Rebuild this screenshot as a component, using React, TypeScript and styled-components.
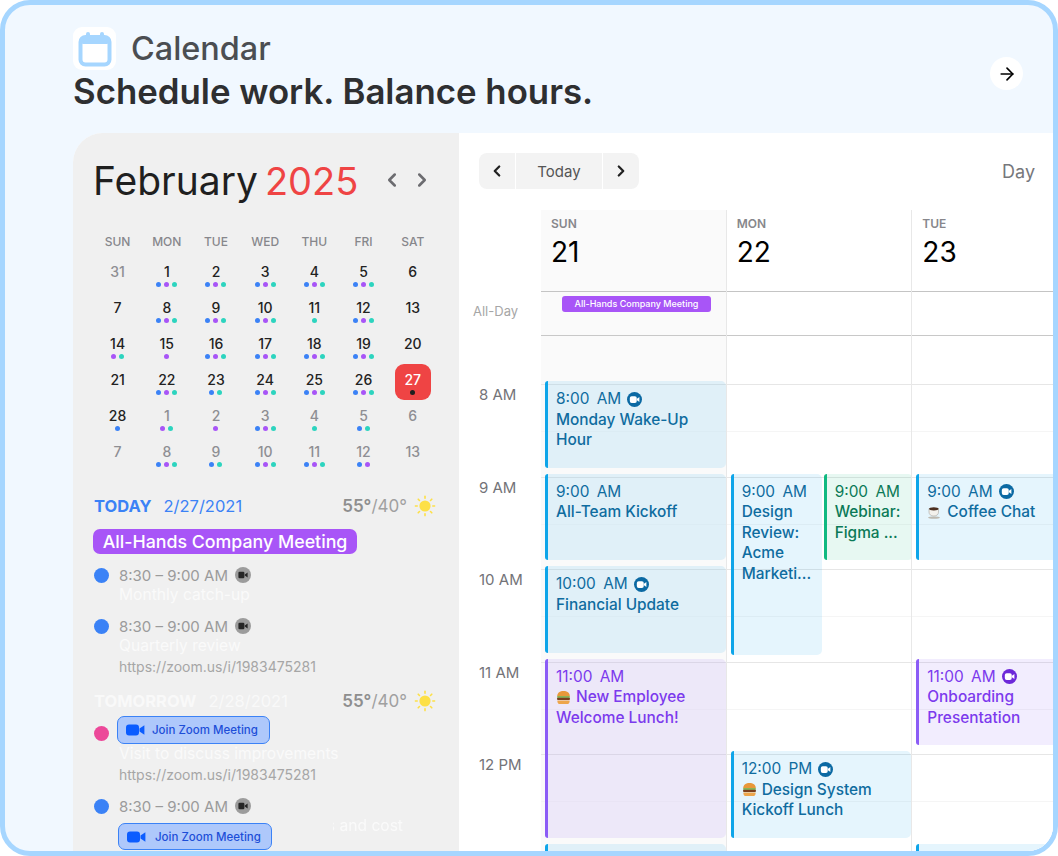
import React from 'react';
import styled, { createGlobalStyle } from 'styled-components';
import { ArrowRight, ChevronLeft, ChevronRight } from 'lucide-react';

const GlobalStyle = createGlobalStyle`
  html, body { margin: 0; padding: 0; background: #fff; }
  body { font-family: Inter, "Noto Sans", sans-serif; }
  * { box-sizing: border-box; }
`;

type Tone = 'blue' | 'green' | 'purple';

const tones = {
  blue: { bg: 'rgba(14,165,233,0.11)', bar: '#0ea5e9', text: '#0f6c9f', icon: '#0b69a3' },
  green: { bg: 'rgba(16,185,129,0.10)', bar: '#10b981', text: '#0b7a57', icon: '#0b7a57' },
  purple: { bg: 'rgba(139,92,246,0.11)', bar: '#8b5cf6', text: '#7c3aed', icon: '#6d28d9' },
};

const dotColors: Record<string, string> = { b: '#3b82f6', p: '#a855f7', t: '#2dd4bf', k: '#1f1f1f' };

const weekdays = ['SUN', 'MON', 'TUE', 'WED', 'THU', 'FRI', 'SAT'];

// [label, dots, muted]
const days: [string, string, boolean?][] = [
  ['31', '', true], ['1', 'bpt'], ['2', 'bpt'], ['3', 'bpt'], ['4', 'bpt'], ['5', 'bpt'], ['6', ''],
  ['7', ''], ['8', 'bpt'], ['9', 'bpt'], ['10', 'bpt'], ['11', 't'], ['12', 'bpt'], ['13', ''],
  ['14', 'pt'], ['15', 'p'], ['16', 'bpt'], ['17', 'bpt'], ['18', 'bpt'], ['19', 'bpt'], ['20', ''],
  ['21', ''], ['22', 'bpt'], ['23', 'bt'], ['24', 'bpt'], ['25', 'bpt'], ['26', 'bpt'], ['27', 'k'],
  ['28', 'b'], ['1', 'pt', true], ['2', 'p', true], ['3', 'bpt', true], ['4', 't', true], ['5', 'bt', true], ['6', '', true],
  ['7', '', true], ['8', 'bpt', true], ['9', 'bt', true], ['10', 'bpt', true], ['11', 'bpt', true], ['12', 'bp', true], ['13', '', true],
];

const HOUR = 92.5;
const OFFSET = 48;

interface CalEvent {
  hour: number;
  span: number;
  left: number;
  width?: number;
  tone: Tone;
  time: string;
  lines: string[];
  video?: boolean;
  emoji?: 'burger' | 'coffee';
  height?: number;
}

const columns: { name: string; date: string; shaded?: boolean; events: CalEvent[] }[] = [
  {
    name: 'SUN',
    date: '21',
    shaded: true,
    events: [
      { hour: 8, span: 1, left: 4, tone: 'blue', time: '8:00 AM', video: true, lines: ['Monday Wake-Up', 'Hour'] },
      { hour: 9, span: 1, left: 4, tone: 'blue', time: '9:00 AM', lines: ['All-Team Kickoff'] },
      { hour: 10, span: 1, left: 4, tone: 'blue', time: '10:00 AM', video: true, lines: ['Financial Update'] },
      { hour: 11, span: 2, left: 4, tone: 'purple', time: '11:00 AM', emoji: 'burger', lines: ['New Employee', 'Welcome Lunch!'] },
      { hour: 13, span: 1, left: 4, tone: 'blue', time: '', lines: [] },
    ],
  },
  {
    name: 'MON',
    date: '22',
    events: [
      { hour: 9, span: 2, left: 4, width: 91, height: 181, tone: 'blue', time: '9:00 AM', lines: ['Design', 'Review:', 'Acme', 'Marketi...'] },
      { hour: 9, span: 1, left: 97, width: 89, tone: 'green', time: '9:00 AM', lines: ['Webinar:', 'Figma ...'] },
      { hour: 12, span: 1, left: 4, tone: 'blue', time: '12:00 PM', video: true, emoji: 'burger', lines: ['Design System', 'Kickoff Lunch'] },
    ],
  },
  {
    name: 'TUE',
    date: '23',
    events: [
      { hour: 9, span: 1, left: 4, tone: 'blue', time: '9:00 AM', video: true, emoji: 'coffee', lines: ['Coffee Chat'] },
      { hour: 11, span: 1, left: 4, tone: 'purple', time: '11:00 AM', video: true, lines: ['Onboarding', 'Presentation'] },
      { hour: 13, span: 1, left: 4, tone: 'blue', time: '', lines: [] },
    ],
  },
];

const hours = ['8 AM', '9 AM', '10 AM', '11 AM', '12 PM'];

const CalendarGlyph = () => (
  <svg width="34" height="36" viewBox="0 0 34 36" fill="none">
    <rect x="2.5" y="6" width="29" height="27.5" rx="5" stroke="#a6d6ff" strokeWidth="4" />
    <rect x="2.5" y="6" width="29" height="7" rx="3" fill="#a6d6ff" />
    <rect x="8" y="1" width="4" height="8" rx="2" fill="#a6d6ff" />
    <rect x="22" y="1" width="4" height="8" rx="2" fill="#a6d6ff" />
  </svg>
);

const SunGlyph = () => (
  <svg width="22" height="22" viewBox="0 0 22 22">
    <circle cx="11" cy="11" r="5.6" fill="#fde047" />
    {[0, 45, 90, 135, 180, 225, 270, 315].map((a) => (
      <rect key={a} x="10.2" y="0.6" width="1.6" height="3.4" rx="0.8" fill="#fde047" transform={`rotate(${a} 11 11)`} />
    ))}
  </svg>
);

const VideoDot = ({ color }: { color: string }) => (
  <svg width="15" height="15" viewBox="0 0 16 16">
    <circle cx="8" cy="8" r="8" fill={color} />
    <rect x="3" y="4.4" width="7.4" height="7.2" rx="2" fill="#fff" />
    <path d="M10.6 7.2 13.2 5.4v5.2L10.6 8.8z" fill="#fff" />
  </svg>
);

const GreyVideo = () => (
  <svg width="16" height="16" viewBox="0 0 16 16">
    <circle cx="8" cy="8" r="8" fill="#9c9c9c" />
    <rect x="3.4" y="4.8" width="6" height="6.4" rx="1.2" fill="#262626" />
    <path d="M9.8 7.4 12.6 5.4v5.2L9.8 8.6z" fill="#262626" />
  </svg>
);

const ZoomCamera = () => (
  <svg width="19" height="12" viewBox="0 0 19 12">
    <rect x="0" y="0.5" width="13" height="11" rx="3" fill="#0b5cff" />
    <path d="M13.5 4.6 18.4 1.2v9.6L13.5 7.4z" fill="#0b5cff" />
  </svg>
);

const Burger = () => (
  <svg width="15" height="15" viewBox="0 0 15 15">
    <path d="M1.2 6.2C1.2 2.8 4 1 7.5 1s6.3 1.8 6.3 5.2z" fill="#e8983a" />
    <rect x="1" y="6.2" width="13" height="1.6" rx="0.8" fill="#6aa62f" />
    <rect x="1" y="7.8" width="13" height="2.2" rx="1" fill="#7a3f1d" />
    <path d="M1.4 10.4h12.2v1c0 1.6-1.2 2.6-2.6 2.6H4c-1.4 0-2.6-1-2.6-2.6z" fill="#eda64c" />
  </svg>
);

const Coffee = () => (
  <svg width="15" height="15" viewBox="0 0 15 15">
    <path d="M2 3.5h9.5v3.6c0 2.4-1.8 3.9-4.7 3.9S2 9.5 2 7.1z" fill="#f3f1ec" stroke="#a9a59d" strokeWidth="0.6" />
    <ellipse cx="6.8" cy="3.8" rx="4.7" ry="1.6" fill="#4b2f20" />
    <ellipse cx="7" cy="12.6" rx="6" ry="1.2" fill="#bdb9b0" />
  </svg>
);

const Item = ({
  color,
  time,
  title,
  url,
  hiddenUntil,
  children,
}: {
  color: string;
  time?: string;
  title: string;
  url?: string;
  hiddenUntil?: number;
  children?: React.ReactNode;
}) => (
  <ItemRow $tall={!time}>
    <ItemHead $tall={!time}>
      <ItemDot $color={color} />
      {time && (
        <>
          <ItemTime>{time}</ItemTime>
          <GreyVideo />
        </>
      )}
    </ItemHead>
    <ItemTitle $hiddenUntil={hiddenUntil}>{title}</ItemTitle>
    {url && <ItemUrl>{url}</ItemUrl>}
    {children}
  </ItemRow>
);

const DayHeading = ({ label, date, color, tight }: { label: string; date: string; color: string; tight?: boolean }) => (
  <AgendaHead $tight={tight}>
    <AgendaLabel $color={color}>{label}</AgendaLabel>
    <AgendaDate $color={color}>{date}</AgendaDate>
    <Weather>
      <b>55°</b>/40°
    </Weather>
    <SunSlot>
      <SunGlyph />
    </SunSlot>
  </AgendaHead>
);

const App: React.FC = () => {
  return (
    <Card>
      <GlobalStyle />
      <Header>
        <div>
          <TitleRow>
            <IconTile>
              <CalendarGlyph />
            </IconTile>
            <AppName>Calendar</AppName>
          </TitleRow>
          <Headline>Schedule work. Balance hours.</Headline>
        </div>
        <ArrowButton>
          <ArrowRight size={20} strokeWidth={2} color="#000" />
        </ArrowButton>
      </Header>

      <Panel>
        <Sidebar>
          <MonthRow>
            <MonthTitle>
              February <span>2025</span>
            </MonthTitle>
            <MonthNav>
              <ChevronLeft size={22} strokeWidth={2.8} color="#6c6c70" />
              <ChevronRight size={22} strokeWidth={2.8} color="#6c6c70" />
            </MonthNav>
          </MonthRow>

          <MiniGrid>
            {weekdays.map((w) => (
              <Weekday key={w}>{w}</Weekday>
            ))}
            {days.map(([label, dots, muted], i) => (
              <DayCell key={i} $today={label === '27'}>
                <DayNum $muted={!!muted} $today={label === '27'}>
                  {label}
                </DayNum>
                <Dots>
                  {dots.split('').map((d, j) => (
                    <Dot key={j} $color={dotColors[d]} />
                  ))}
                </Dots>
              </DayCell>
            ))}
          </MiniGrid>

          <DayHeading label="TODAY" date="2/27/2021" color="#3b82f6" />
          <AllDayPill>All-Hands Company Meeting</AllDayPill>
          <Item color="#3b82f6" time="8:30 – 9:00 AM" title="Monthly catch-up" />
          <Item color="#3b82f6" time="8:30 – 9:00 AM" title="Quarterly review" url="https://zoom.us/i/1983475281" />

          <DayHeading label="TOMORROW" date="2/28/2021" color="#f9f9f9" tight />
          <Item color="#ec4899" title="Visit to discuss improvements" url="https://zoom.us/i/1983475281">
            <JoinButton $left={23} $top={-7}>
              <ZoomCamera />
              Join Zoom Meeting
            </JoinButton>
          </Item>
          <Item color="#3b82f6" time="8:30 – 9:00 AM" title="Review of plans for expenses and cost" hiddenUntil={214}>
            <JoinButton $left={24} $top={27} $wide>
              <ZoomCamera />
              Join Zoom Meeting
            </JoinButton>
          </Item>
        </Sidebar>

        <Main>
          <Toolbar>
            <Segments>
              <Segment $w={36}>
                <ChevronLeft size={18} strokeWidth={3} color="#222" />
              </Segment>
              <Segment $w={86}>Today</Segment>
              <Segment $w={36}>
                <ChevronRight size={18} strokeWidth={3} color="#222" />
              </Segment>
            </Segments>
            <ViewName>Day</ViewName>
          </Toolbar>

          <Week>
            <Gutter>
              <AllDayLabel>All-Day</AllDayLabel>
              {hours.map((h) => (
                <HourLabel key={h}>{h}</HourLabel>
              ))}
            </Gutter>
            {columns.map((col) => (
              <Column key={col.name} $shaded={!!col.shaded}>
                <DayHead>
                  <DayName>{col.name}</DayName>
                  <DayDate>{col.date}</DayDate>
                </DayHead>
                <AllDayRow>{col.name === 'SUN' && <AllDayChip>All-Hands Company Meeting</AllDayChip>}</AllDayRow>
                <Body>
                  <Spacer />
                  {hours.map((h) => (
                    <Slot key={h} />
                  ))}
                  {col.events.map((ev, i) => (
                    <EventBox
                      key={i}
                      $tone={ev.tone}
                      style={{
                        top: OFFSET + (ev.hour - 8) * HOUR - 3,
                        left: ev.left,
                        width: ev.width ?? undefined,
                        right: ev.width ? undefined : 0,
                        height: ev.height ?? ev.span * HOUR - 6,
                      }}
                    >
                      {ev.time && (
                        <EventTime>
                          {ev.time}
                          {ev.video && <VideoDot color={tones[ev.tone].icon} />}
                        </EventTime>
                      )}
                      {ev.lines.map((line, j) => (
                        <EventLine key={j}>
                          {j === 0 && ev.emoji === 'burger' && <Burger />}
                          {j === 0 && ev.emoji === 'coffee' && <Coffee />}
                          {line}
                        </EventLine>
                      ))}
                    </EventBox>
                  ))}
                </Body>
              </Column>
            ))}
          </Week>
        </Main>
      </Panel>
    </Card>
  );
};

export default App;

const Card = styled.div`
  width: 1058px;
  height: 856px;
  border: 5px solid #a6d6ff;
  border-radius: 30px;
  background: #f1f8ff;
  overflow: hidden;
  display: flex;
  flex-direction: column;
`;

const Header = styled.header`
  display: flex;
  justify-content: space-between;
  padding: 22px 30px 21px 68px;
`;

const TitleRow = styled.div`
  display: flex;
  align-items: center;
  gap: 15px;
  height: 43px;
`;

const IconTile = styled.div`
  width: 43px;
  height: 43px;
  border-radius: 9px;
  background: #fff;
  display: flex;
  align-items: center;
  justify-content: center;
`;

const AppName = styled.div`
  font-size: 32.4px;
  font-weight: 500;
  color: #4b4e52;
`;

const Headline = styled.h1`
  margin: 0;
  font-size: 34.8px;
  line-height: 42px;
  font-weight: 600;
  color: #2e2f31;
`;

const ArrowButton = styled.div`
  width: 33px;
  height: 33px;
  margin-top: 30px;
  border-radius: 50%;
  background: #fff;
  display: flex;
  align-items: center;
  justify-content: center;
`;

const Panel = styled.div`
  flex: 1;
  min-height: 0;
  margin-left: 68px;
  display: flex;
  background: #fff;
  border-top-left-radius: 30px;
  overflow: hidden;
`;

const Sidebar = styled.aside`
  width: 386px;
  flex: none;
  background: #f0f0f0;
  padding: 24px 0 0 21px;
  overflow: hidden;
`;

const MonthRow = styled.div`
  display: flex;
  align-items: center;
  height: 46px;
`;

const MonthTitle = styled.div`
  margin-left: -1px;
  font-size: 39px;
  font-weight: 400;
  word-spacing: -4px;
  color: #1f1f1f;
  white-space: nowrap;

  span {
    font-size: 38px;
    color: #ef4444;
  }
`;

const MonthNav = styled.div`
  margin-left: 23px;
  display: flex;
  gap: 8px;
`;

const MiniGrid = styled.div`
  margin: 31px 0 0 -1px;
  width: 345px;
  display: grid;
  grid-template-columns: repeat(7, 49.2px);
  justify-items: center;
`;

const Weekday = styled.div`
  height: 22px;
  line-height: 16px;
  font-size: 12px;
  font-weight: 500;
  color: #87878c;
`;

const DayCell = styled.div<{ $today: boolean }>`
  width: 36px;
  height: 36px;
  padding-top: 7px;
  border-radius: 9px;
  background: ${(p) => (p.$today ? '#ef4444' : 'transparent')};
  display: flex;
  flex-direction: column;
  align-items: center;
`;

const DayNum = styled.div<{ $muted: boolean; $today: boolean }>`
  height: 18px;
  line-height: 18px;
  font-size: 14px;
  font-weight: 500;
  color: ${(p) => (p.$today ? '#fff' : p.$muted ? '#8e8e93' : '#222')};
`;

const Dots = styled.div`
  margin-top: 1px;
  display: flex;
  gap: 3px;
  height: 5px;
`;

const Dot = styled.i<{ $color: string }>`
  width: 5px;
  height: 5px;
  border-radius: 50%;
  background: ${(p) => p.$color};
`;

const AgendaHead = styled.div<{ $tight?: boolean }>`
  margin-top: ${(p) => (p.$tight ? 14 : 24)}px;
  height: 20px;
  display: flex;
  align-items: center;
  width: 342px;
`;

const AgendaLabel = styled.span<{ $color: string }>`
  font-size: 16.5px;
  font-weight: 700;
  color: ${(p) => p.$color};
`;

const AgendaDate = styled.span<{ $color: string }>`
  margin-left: 12px;
  font-size: 16.5px;
  font-weight: 400;
  color: ${(p) => p.$color};
`;

const Weather = styled.span`
  margin-left: auto;
  font-size: 17px;
  color: #a0a0a0;

  b {
    font-weight: 600;
    color: #8e8e8e;
  }
`;

const SunSlot = styled.span`
  margin-left: 7px;
  display: flex;
`;

const AllDayPill = styled.div`
  margin: 13px 0 0 -1px;
  width: 264px;
  height: 25px;
  line-height: 25px;
  border-radius: 7px;
  background: #a855f7;
  color: #fff;
  font-size: 17.8px;
  font-weight: 500;
  text-align: center;
  white-space: nowrap;
`;

const ItemRow = styled.div<{ $tall: boolean }>`
  position: relative;
  margin-top: ${(p) => (p.$tall ? 12 : 11)}px;
  padding-left: 25px;
`;

const ItemHead = styled.div<{ $tall: boolean }>`
  height: ${(p) => (p.$tall ? 21 : 20)}px;
  display: flex;
  align-items: center;
  gap: 7px;
`;

const ItemDot = styled.span<{ $color: string }>`
  position: absolute;
  left: 0;
  top: 2.5px;
  width: 15px;
  height: 15px;
  border-radius: 50%;
  background: ${(p) => p.$color};
`;

const ItemTime = styled.span`
  font-size: 15px;
  color: #9b9b9b;
`;

const ItemTitle = styled.div<{ $hiddenUntil?: number }>`
  height: 20px;
  line-height: 20px;
  font-size: 15.6px;
  color: #fafafa;
  white-space: nowrap;
  ${(p) => p.$hiddenUntil && `mask-image: linear-gradient(90deg, transparent ${p.$hiddenUntil}px, #000 ${p.$hiddenUntil}px);`}
`;

const ItemUrl = styled.div`
  margin-top: 1px;
  height: 20px;
  line-height: 20px;
  font-size: 14px;
  color: #a6a6a6;
`;

const JoinButton = styled.div<{ $left: number; $top: number; $wide?: boolean }>`
  position: absolute;
  left: ${(p) => p.$left}px;
  top: ${(p) => p.$top}px;
  width: ${(p) => (p.$wide ? 154 : 153)}px;
  height: ${(p) => (p.$wide ? 27 : 28)}px;
  padding-left: 8px;
  display: flex;
  align-items: center;
  gap: ${(p) => (p.$wide ? 9 : 7)}px;
  border: 1.5px solid #3b82f6;
  border-radius: 7px;
  background: #aec8fb;
  color: #1d4ed8;
  font-size: 11.5px;
  font-weight: 500;
  white-space: nowrap;
`;

const Main = styled.main`
  flex: 1;
  min-width: 0;
  padding-top: 20px;
  overflow: hidden;
`;

const Toolbar = styled.div`
  display: flex;
  align-items: center;
  justify-content: space-between;
  padding: 0 18px 0 20px;
  height: 36px;
`;

const Segments = styled.div`
  display: flex;
  gap: 1px;
  border-radius: 8px;
  overflow: hidden;
`;

const Segment = styled.div<{ $w: number }>`
  width: ${(p) => p.$w}px;
  height: 36px;
  background: #f3f3f3;
  display: flex;
  align-items: center;
  justify-content: center;
  font-size: 15px;
  color: #555;
`;

const ViewName = styled.div`
  font-size: 18px;
  color: #77777b;
`;

const Week = styled.div`
  margin-top: 21px;
  display: grid;
  grid-template-columns: 82px repeat(3, 185.67px);
`;

const Gutter = styled.div`
  padding-top: 81px;
`;

const AllDayLabel = styled.div`
  height: 93px;
  padding: 11px 0 0 14px;
  line-height: 18px;
  font-size: 13px;
  color: #a6a6a6;
`;

const HourLabel = styled.div`
  height: 92.5px;
  padding: 1px 0 0 20px;
  line-height: 20px;
  font-size: 15px;
  color: #737378;
`;

const Column = styled.div<{ $shaded: boolean }>`
  background: ${(p) => (p.$shaded ? '#fafafa' : '#fff')};
  border-right: 1px solid #e8e8e8;
`;

const DayHead = styled.div`
  height: 81px;
  padding: 6px 0 0 10px;
`;

const DayName = styled.div`
  font-size: 12px;
  line-height: 16px;
  font-weight: 600;
  color: #87878c;
`;

const DayDate = styled.div`
  margin-top: 3px;
  font-size: 28px;
  line-height: 34px;
  font-weight: 400;
  color: #000;
`;

const AllDayRow = styled.div`
  height: 45px;
  padding: 4px 0 0 21px;
  border-top: 1px solid #c4c4c4;
  border-bottom: 1px solid #c8c8c8;
`;

const AllDayChip = styled.div`
  width: 149px;
  height: 16px;
  line-height: 16px;
  border-radius: 3px;
  background: #a855f7;
  color: #fff;
  font-size: 9px;
  font-weight: 500;
  text-align: center;
  white-space: nowrap;
`;

const Body = styled.div`
  position: relative;
  height: 520px;
  overflow: hidden;
`;

const Spacer = styled.div`
  height: 48px;
`;

const Slot = styled.div`
  height: 92.5px;
  border-top: 1px solid #e6e6e6;
  background: linear-gradient(#f5f5f5, #f5f5f5) 0 46px / 100% 1px no-repeat;
`;

const EventBox = styled.div<{ $tone: Tone }>`
  position: absolute;
  padding: 8px 4px 0 8px;
  border-left: 3px solid ${(p) => tones[p.$tone].bar};
  border-radius: 3px 5px 5px 3px;
  background: ${(p) => tones[p.$tone].bg};
  color: ${(p) => tones[p.$tone].text};
  font-size: 15.4px;
  line-height: 20.5px;
  overflow: hidden;
`;

const EventTime = styled.div`
  display: flex;
  align-items: center;
  gap: 6px;
  font-weight: 400;
  word-spacing: 3px;
  white-space: nowrap;
`;

const EventLine = styled.div`
  display: flex;
  align-items: center;
  gap: 5px;
  font-weight: 500;
  white-space: nowrap;
`;
